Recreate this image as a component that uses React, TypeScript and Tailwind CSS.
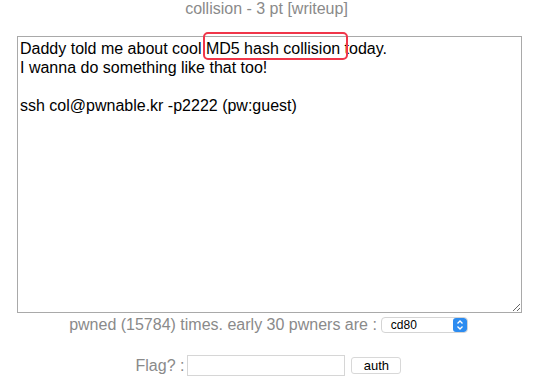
import React from 'react';

export default function App() {
  const text =
    'Daddy told me about cool MD5 hash collision today.\nI wanna do something like that too!\n\nssh col@pwnable.kr -p2222 (pw:guest)';

  return (
    <div className="w-[554px] h-[378px] bg-white overflow-hidden font-['Liberation_Sans',Arial,sans-serif]">
      <div className="text-center text-[16px] leading-[18px] text-[#8a8a8a] pr-[21px]">
        collision - 3 pt [writeup]
      </div>

      <div className="relative mt-[18px] ml-[17px] w-[505px] h-[277px]">
        <textarea
          readOnly
          value={text}
          className="block w-full h-full border border-[#a9a9a9] px-[2px] pt-[2px] text-[16px] leading-[19px] text-black resize-y outline-none font-['Liberation_Sans',Arial,sans-serif]"
        />
        <div className="absolute left-[186px] top-[-4px] w-[145px] h-[28px] border-[2px] border-[#f0364a] rounded-[5px] pointer-events-none" />
      </div>

      <div className="flex items-center justify-center mt-[3px] pr-[17px] h-[18px] gap-[4px] text-[16px] text-[#8a8a8a]">
        <span>pwned (15784) times. early 30 pwners are :</span>
        <div className="flex items-center w-[87px] h-[16px] border border-[#d4d4d4] rounded-[4px] bg-white overflow-hidden">
          <span className="flex-1 pl-[9px] text-[12px] leading-[14px] text-black">cd80</span>
          <div className="w-[14px] h-full bg-[#2d8cf0] flex items-center justify-center rounded-[3px]">
            <svg width="8" height="12" viewBox="0 0 8 12">
              <path d="M1.5 4.5 L4 2 L6.5 4.5 M1.5 7.5 L4 10 L6.5 7.5" fill="none" stroke="white" strokeWidth="1.3" />
            </svg>
          </div>
        </div>
      </div>

      <div className="flex items-center justify-center mt-[21px] pr-[17px] h-[21px] text-[16px] text-[#8a8a8a]">
        <span>Flag? :</span>
        <div className="ml-[3px] w-[158px] h-[21px] border border-[#d6d6d6] bg-white" />
        <div className="ml-[6px] w-[50px] h-[17px] border border-[#d8d8d8] rounded-[3px] bg-white flex items-center justify-center text-[13px] text-black">
          auth
        </div>
      </div>
    </div>
  );
}
